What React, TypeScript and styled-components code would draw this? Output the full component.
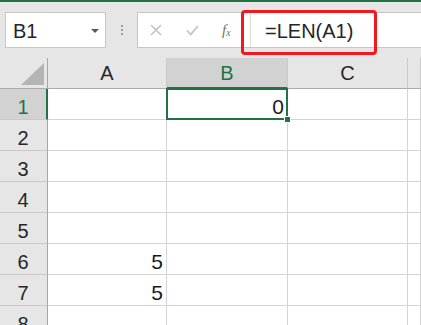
import { Fragment } from 'react';
import styled, { createGlobalStyle } from 'styled-components';

const GlobalStyle = createGlobalStyle`
    html, body {
        margin: 0;
        padding: 0;
        background: #ffffff;
        overflow: hidden;
        font-family: "Liberation Sans", Arial, sans-serif;
    }
`

const Page = styled.div`
    width: 421px;
    height: 325px;
    overflow: hidden;
`

const Toolbar = styled.div`
    box-sizing: border-box;
    height: 58px;
    border-top: 2px solid #217346;
    background: #e6e6e6;
    display: flex;
    align-items: center;
    padding-left: 5px;
`

const NameBox = styled.div`
    box-sizing: border-box;
    width: 101px;
    height: 36px;
    background: #ffffff;
    border: 1px solid #c6c6c6;
    display: flex;
    align-items: center;
    justify-content: space-between;
    padding: 2px 6px 0 7px;
    font-size: 20px;
    color: #262626;
`

const DropArrow = styled.span`
    width: 0;
    height: 0;
    border-left: 4px solid transparent;
    border-right: 4px solid transparent;
    border-top: 4px solid #5a5a5a;
`

const Grip = styled.div`
    width: 31px;
    display: flex;
    flex-direction: column;
    align-items: center;
    gap: 2px;

    span {
        width: 2px;
        height: 2px;
        background: #9c9c9c;
    }
`

const FormulaBox = styled.div`
    position: relative;
    flex: 1;
    box-sizing: border-box;
    height: 36px;
    background: #ffffff;
    border: 1px solid #c6c6c6;
    border-right: none;
    display: flex;
`

const ButtonArea = styled.div`
    width: 112px;
    display: flex;
    align-items: center;
    padding-left: 12px;
    gap: 24px;
    box-sizing: border-box;
`

const Fx = styled.i`
    font-family: "Liberation Serif", "Times New Roman", serif;
    font-size: 15px;
    color: #707070;
    margin-left: -1px;

    sub {
        font-size: 10px;
        vertical-align: -1px;
    }
`

const FormulaInput = styled.div`
    flex: 1;
    border-left: 1px solid #d8d8d8;
    display: flex;
    align-items: center;
    padding: 2px 0 0 14px;
    font-size: 20px;
    color: #262626;
`

const Highlight = styled.div`
    position: absolute;
    left: 103px;
    top: -3px;
    width: 136px;
    height: 45px;
    box-sizing: border-box;
    border: 3px solid #f2191e;
    border-radius: 4px;
`

const Sheet = styled.div`
    display: grid;
    grid-template-columns: 48px 119px 121px 120px 1fr;
    grid-auto-rows: 31px;
`

const Corner = styled.div`
    box-sizing: border-box;
    background: #e6e6e6;
    border-right: 1px solid #a6a6a6;
    border-bottom: 1px solid #ababab;
    display: flex;
    align-items: flex-end;
    justify-content: flex-end;
    padding: 0 3px 3px 0;
`

const ColHeader = styled.div<{ $active?: boolean }>`
    box-sizing: border-box;
    background: ${p => p.$active ? '#d2d2d2' : '#e6e6e6'};
    color: ${p => p.$active ? '#217346' : '#262626'};
    border-right: 1px solid #c9c9c9;
    border-bottom: ${p => p.$active ? '2px solid #217346' : '1px solid #ababab'};
    display: flex;
    align-items: flex-end;
    justify-content: center;
    padding-bottom: ${p => p.$active ? '2px' : '3px'};
    font-size: 20px;
`

const RowHeader = styled.div<{ $active?: boolean }>`
    box-sizing: border-box;
    background: ${p => p.$active ? '#d2d2d2' : '#e6e6e6'};
    color: ${p => p.$active ? '#217346' : '#262626'};
    border-right: ${p => p.$active ? '2px solid #217346' : '1px solid #a6a6a6'};
    border-bottom: 1px solid #c9c9c9;
    display: flex;
    align-items: flex-end;
    justify-content: center;
    padding-right: ${p => p.$active ? '0' : '1px'};
    font-size: 20px;
`

const Cell = styled.div<{ $selected?: boolean }>`
    position: relative;
    z-index: ${p => p.$selected ? 2 : 'auto'};
    box-sizing: border-box;
    border-right: 1px solid #d4d4d4;
    border-bottom: 1px solid #d4d4d4;
    display: flex;
    align-items: flex-end;
    justify-content: flex-end;
    padding-right: 3px;
    font-size: 21px;
    color: #1a1a1a;
`

const Selection = styled.div`
    position: absolute;
    top: -1px;
    left: -1px;
    right: -1px;
    bottom: -1px;
    border: 2px solid #217346;
    pointer-events: none;
`

const FillHandle = styled.div`
    position: absolute;
    right: -4px;
    bottom: -4px;
    width: 7px;
    height: 7px;
    box-sizing: border-box;
    background: #217346;
    border: 1px solid #ffffff;
`

const columns = ['A', 'B', 'C', ''];

const rows: { n: number; a?: string; b?: string }[] = [
    { n: 1, b: '0' },
    { n: 2 },
    { n: 3 },
    { n: 4 },
    { n: 5 },
    { n: 6, a: '5' },
    { n: 7, a: '5' },
    { n: 8 },
];

const CrossIcon = () => (
    <svg width="12" height="12" viewBox="0 0 12 12">
        <path d="M1 1 L11 11 M11 1 L1 11" stroke="#c4c4c4" strokeWidth="1.6" fill="none" />
    </svg>
);

const CheckIcon = () => (
    <svg width="13" height="11" viewBox="0 0 13 11">
        <path d="M1 5.5 L4.8 9.5 L12 1" stroke="#c4c4c4" strokeWidth="1.8" fill="none" />
    </svg>
);

export default function App() {
    return (
        <Page>
            <GlobalStyle />
            <Toolbar>
                <NameBox>
                    B1
                    <DropArrow />
                </NameBox>

                <Grip>
                    <span />
                    <span />
                    <span />
                </Grip>

                <FormulaBox>
                    <ButtonArea>
                        <CrossIcon />
                        <CheckIcon />
                        <Fx>f<sub>x</sub></Fx>
                    </ButtonArea>

                    <FormulaInput>=LEN(A1)</FormulaInput>

                    <Highlight />
                </FormulaBox>
            </Toolbar>

            <Sheet>
                <Corner>
                    <svg width="23" height="22" viewBox="0 0 23 22">
                        <polygon points="23,0 23,22 0,22" fill="#b4b4b4" />
                    </svg>
                </Corner>
                {columns.map((c, i) => (
                    <ColHeader key={i} $active={c === 'B'}>{c}</ColHeader>
                ))}

                {rows.map(r => (
                    <Fragment key={r.n}>
                        <RowHeader $active={r.n === 1}>{r.n}</RowHeader>
                        <Cell>{r.a}</Cell>
                        <Cell $selected={r.n === 1}>
                            {r.b}
                            {r.n === 1 && <Selection />}
                            {r.n === 1 && <FillHandle />}
                        </Cell>
                        <Cell />
                        <Cell />
                    </Fragment>
                ))}
            </Sheet>
        </Page>
    );
}
